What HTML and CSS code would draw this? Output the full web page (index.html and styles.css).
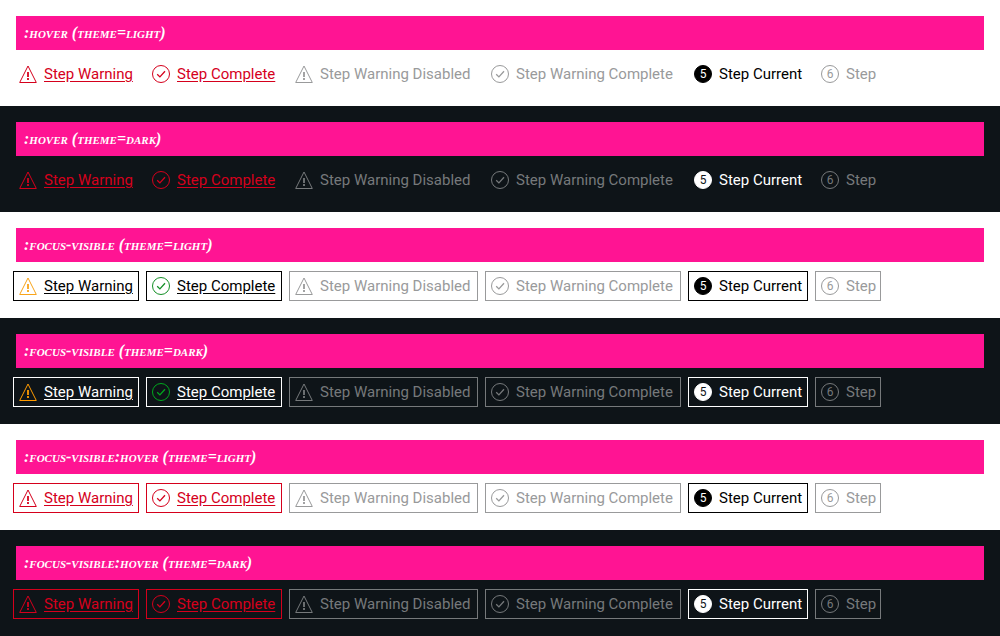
FILE: index.html
```
<!DOCTYPE html>
<html lang="en">
<head>
<meta charset="utf-8">
<title>Stepper states</title>
<link rel="stylesheet" href="styles.css">
<script src="steps.js" defer></script>
</head>
<body>
<svg class="sprite" aria-hidden="true">
  <symbol id="warning" viewBox="0 0 24 24"><path class="line" d="M12 4 3.7 20.5h16.6z"/><path class="fill" d="M11.1 10h1.8v5h-1.8zM11.1 16h1.8v2h-1.8z"/></symbol>
  <symbol id="complete" viewBox="0 0 24 24"><circle class="line" cx="12" cy="12" r="8.5"/><path class="line check" d="m8.2 12.2 2.7 2.7 5.1-5.7"/></symbol>
</svg>
<section class="state light hover"><h2 class="title">:hover (theme=light)</h2></section>
<section class="state dark hover"><h2 class="title">:hover (theme=dark)</h2></section>
<section class="state light focus"><h2 class="title">:focus-visible (theme=light)</h2></section>
<section class="state dark focus"><h2 class="title">:focus-visible (theme=dark)</h2></section>
<section class="state light focus hover"><h2 class="title">:focus-visible:hover (theme=light)</h2></section>
<section class="state dark focus hover"><h2 class="title">:focus-visible:hover (theme=dark)</h2></section>
<template id="stepper">
  <div class="steps">
    <button class="step link warning" type="button"><svg class="icon" aria-hidden="true"><use href="#warning"/></svg><span class="label">Step Warning</span></button>
    <button class="step link complete" type="button"><svg class="icon" aria-hidden="true"><use href="#complete"/></svg><span class="label">Step Complete</span></button>
    <button class="step muted" type="button" disabled><svg class="icon" aria-hidden="true"><use href="#warning"/></svg><span class="label">Step Warning Disabled</span></button>
    <button class="step muted" type="button" disabled><svg class="icon" aria-hidden="true"><use href="#complete"/></svg><span class="label">Step Warning Complete</span></button>
    <button class="step current" type="button" aria-current="step"><span class="number">5</span><span class="label">Step Current</span></button>
    <button class="step muted" type="button" disabled><span class="number">6</span><span class="label">Step</span></button>
  </div>
</template>
</body>
</html>
```
FILE: styles.css
```
body {
  margin: 0;
  background: #fff;
  font-family: Roboto, "Liberation Sans", sans-serif;
}
.sprite { position: absolute; width: 0; height: 0; }
.light {
  --bg: #fff; --text: #000; --muted: #999a9b;
  --warn: #f8a41a; --ok: #138f26; --red: #d5001c;
}
.dark {
  --bg: #0e1418; --text: #fff; --muted: #76797b;
  --warn: #ff9b00; --ok: #00a81e; --red: #d5001c;
}
.state { padding: 16px 16px 20px; background: var(--bg); }
.title {
  margin: 0 0 12px;
  padding: 8px;
  background: #ff1493;
  color: #fff;
  font: italic bold 16px/18px "Liberation Serif", serif;
  font-variant: small-caps;
}
.steps {
  display: grid;
  grid-template-columns: 120px 130px 183px 190px 114px 60px;
  column-gap: 13px;
}
.step {
  display: flex;
  align-items: center;
  gap: 4px;
  padding: 0;
  border: 0;
  background: none;
  color: var(--text);
  font: 15px/24px Roboto, "Liberation Sans", sans-serif;
  white-space: nowrap;
}
.link .label { text-decoration: underline; text-underline-offset: 2px; }
.muted { color: var(--muted); }
.warning .icon { color: var(--warn); }
.complete .icon { color: var(--ok); }
.hover .link, .hover .link .icon { color: var(--red); }
.focus .step { outline: 1px solid currentColor; outline-offset: 2px; }
.icon { width: 24px; height: 24px; flex: none; }
.line { fill: none; stroke: currentColor; stroke-width: 1; }
.check { stroke-width: 1.3; }
.fill { fill: currentColor; }
.number {
  box-sizing: border-box;
  flex: none;
  width: 18px;
  height: 18px;
  margin: 3px;
  border: 1px solid currentColor;
  border-radius: 50%;
  font-size: 12px;
  line-height: 16px;
  text-align: center;
}
.current .number { background: var(--text); border-color: var(--text); color: var(--bg); }
```
FILE: steps.js
```
const stepper = document.getElementById("stepper");
document.querySelectorAll(".state").forEach((state) => {
  state.append(stepper.content.cloneNode(true));
});
```
